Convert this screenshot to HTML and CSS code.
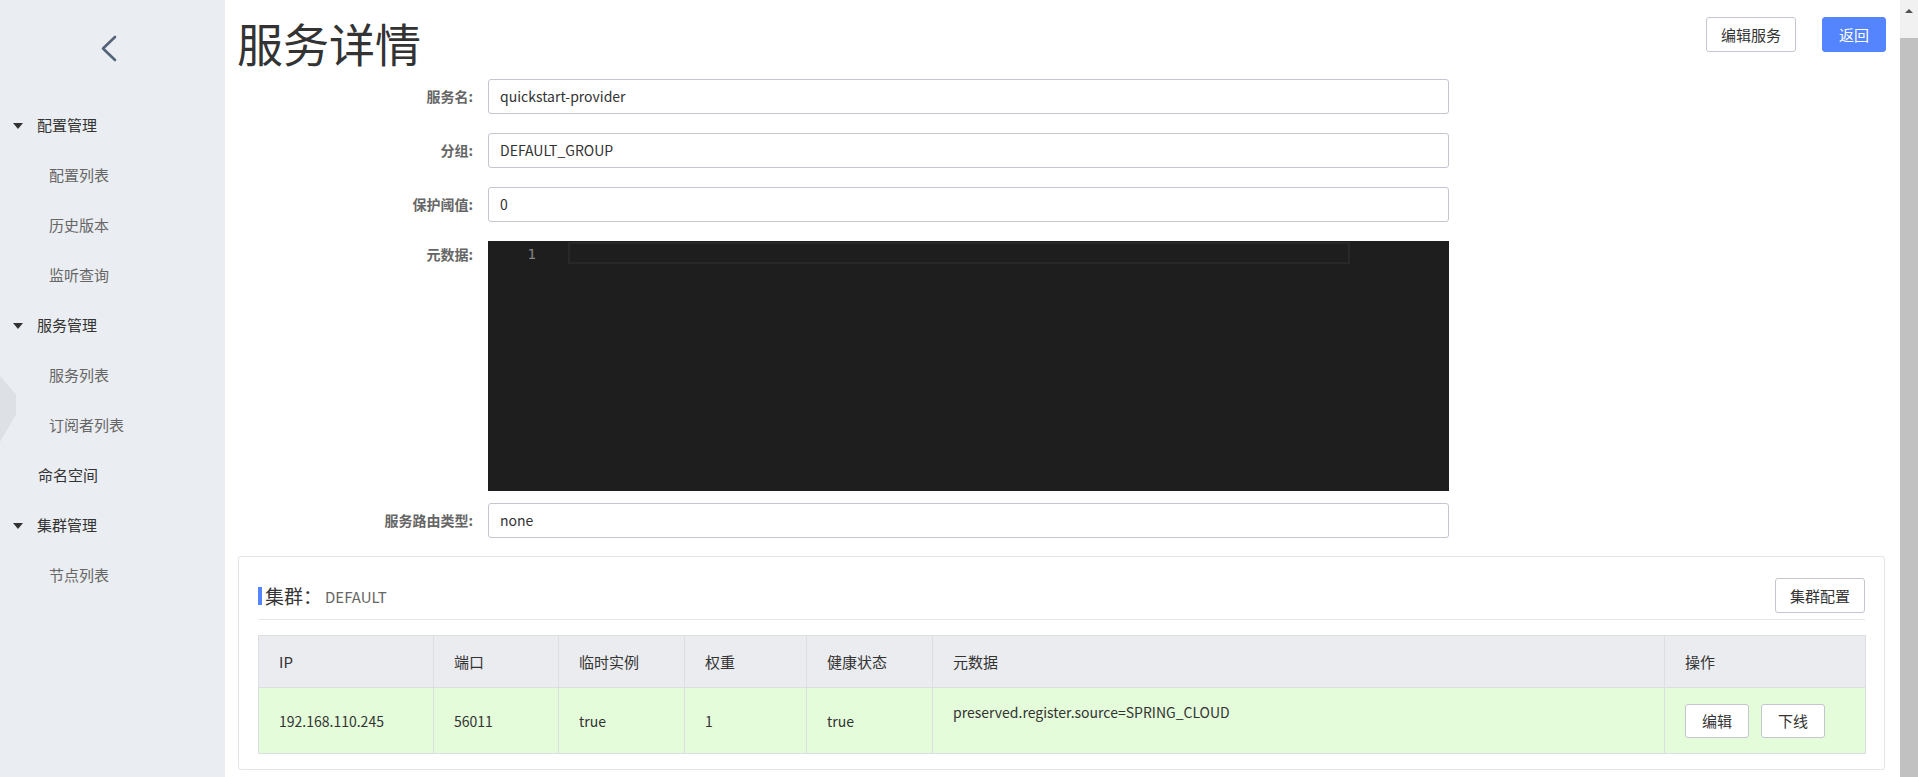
FILE: index.html
```html
<!DOCTYPE html>
<html lang="zh-CN">
<head>
<meta charset="utf-8">
<title>服务详情</title>
<link rel="stylesheet" href="styles.css">
</head>
<body>
<aside class="sidebar">
  <div class="collapse-tab"></div>
  <div class="back">
    <svg width="18" height="27" viewBox="0 0 18 27"><polyline points="15,2 3,13.5 15,25" fill="none" stroke="#546478" stroke-width="2.6" stroke-linecap="round" stroke-linejoin="round"/></svg>
  </div>
  <nav class="menu">
    <div class="group"><span class="caret"></span>配置管理</div>
    <div class="item">配置列表</div>
    <div class="item">历史版本</div>
    <div class="item">监听查询</div>
    <div class="group"><span class="caret"></span>服务管理</div>
    <div class="item">服务列表</div>
    <div class="item">订阅者列表</div>
    <div class="group plain">命名空间</div>
    <div class="group"><span class="caret"></span>集群管理</div>
    <div class="item">节点列表</div>
  </nav>
</aside>

<main class="main">
  <header class="page-head">
    <h1 class="page-title">服务详情</h1>
    <div class="head-actions">
      <button class="btn">编辑服务</button>
      <button class="btn btn-primary">返回</button>
    </div>
  </header>

  <section class="form">
    <label class="form-label">服务名:</label>
    <div class="input">quickstart-provider</div>

    <label class="form-label">分组:</label>
    <div class="input">DEFAULT_GROUP</div>

    <label class="form-label">保护阈值:</label>
    <div class="input">0</div>

    <label class="form-label label-top">元数据:</label>
    <div class="editor">
      <div class="gutter"><span class="ln">1</span></div>
      <div class="code"><div class="current-line"></div></div>
    </div>

    <label class="form-label">服务路由类型:</label>
    <div class="input">none</div>
  </section>

  <section class="cluster-card">
    <div class="card-head">
      <div class="card-title"><span class="title-bar"></span><span class="title-main">集群：</span><span class="title-sub">DEFAULT</span></div>
      <button class="btn">集群配置</button>
    </div>
    <table class="grid">
      <colgroup>
        <col style="width:175px"><col style="width:125px"><col style="width:126px"><col style="width:122px"><col style="width:126px"><col style="width:732px"><col style="width:201px">
      </colgroup>
      <thead>
        <tr><th>IP</th><th>端口</th><th>临时实例</th><th>权重</th><th>健康状态</th><th>元数据</th><th>操作</th></tr>
      </thead>
      <tbody>
        <tr>
          <td>192.168.110.245</td>
          <td>56011</td>
          <td>true</td>
          <td>1</td>
          <td>true</td>
          <td class="td-top">preserved.register.source=SPRING_CLOUD</td>
          <td><div class="ops"><button class="btn btn-sm">编辑</button><button class="btn btn-sm">下线</button></div></td>
        </tr>
      </tbody>
    </table>
  </section>
</main>

<div class="scrollbar">
  <div class="sb-btn"><span class="sb-arrow"></span></div>
  <div class="sb-track"></div>
  <div class="sb-thumb"></div>
</div>
</body>
</html>
```

FILE: styles.css
```css
* { box-sizing: border-box; }

html, body {
  margin: 0;
  height: 100%;
}

body {
  display: flex;
  height: 777px;
  overflow: hidden;
  background: #fff;
  color: #333;
  font-family: "Noto Sans CJK SC", "Noto Sans", sans-serif;
  font-size: 15px;
}

/* ---------- sidebar ---------- */
.sidebar {
  position: relative;
  flex: none;
  width: 225px;
  background: #eaedf1;
}

.collapse-tab {
  position: absolute;
  left: 0;
  top: 376px;
  width: 16px;
  height: 66px;
  background: #dde0e5;
  clip-path: polygon(0 0, 0 0, 100% 28%, 100% 58%, 0 100%);
}

.back {
  height: 100px;
  display: flex;
  justify-content: center;
  padding-top: 35px;
  padding-right: 7px;
}

.menu {
  display: flex;
  flex-direction: column;
}

.group,
.item {
  height: 50px;
  line-height: 50px;
  white-space: nowrap;
}

.group {
  display: flex;
  align-items: center;
  color: #333;
  padding-left: 13px;
}

.group.plain {
  padding-left: 38px;
}

.caret {
  width: 0;
  height: 0;
  border-left: 5.5px solid transparent;
  border-right: 5.5px solid transparent;
  border-top: 6px solid #333;
  margin-right: 14px;
  margin-top: 1px;
}

.item {
  color: #666;
  padding-left: 49px;
}

/* ---------- main ---------- */
.main {
  flex: 1;
  min-width: 0;
  padding: 0 14px 0 12px;
}

.page-head {
  height: 79px;
  display: flex;
  justify-content: space-between;
  align-items: flex-start;
}

.page-title {
  margin: 12px 0 0 0;
  font-size: 46px;
  line-height: 60px;
  font-weight: normal;
  color: #333;
}

.head-actions {
  display: flex;
  gap: 26px;
  margin-top: 17px;
}

.btn {
  height: 35px;
  padding: 0 14px;
  border: 1px solid #c4c6cf;
  border-radius: 3px;
  background: #fff;
  color: #333;
  font-family: inherit;
  font-size: 15px;
  line-height: 33px;
  white-space: nowrap;
}

.btn-primary {
  background: #5584ff;
  border-color: #5584ff;
  color: #fff;
  padding: 0 16px;
}

/* ---------- form ---------- */
.form {
  display: grid;
  grid-template-columns: 236px 961px;
  column-gap: 15px;
  row-gap: 19px;
  align-items: start;
}

.form-label {
  text-align: right;
  font-size: 14px;
  font-weight: bold;
  color: #666;
  line-height: 35px;
  white-space: nowrap;
}

.form-label.label-top {
  line-height: 26px;
}

.input {
  height: 35px;
  line-height: 33px;
  padding: 0 11px;
  border: 1px solid #c4c6cf;
  border-radius: 3px;
  color: #333;
  font-size: 14px;
  white-space: nowrap;
}

.editor {
  display: flex;
  height: 250px;
  background: #1e1e1e;
  margin-bottom: -7px;
}

.gutter {
  width: 80px;
  flex: none;
  text-align: right;
  padding-right: 32px;
  padding-top: 1px;
}

.ln {
  font-family: "DejaVu Sans Mono", "Liberation Mono", monospace;
  font-size: 14px;
  line-height: 22px;
  color: #858585;
}

.code {
  flex: 1;
  padding-top: 1px;
}

.current-line {
  width: 782px;
  height: 22px;
  border: 2px solid #282828;
}

/* ---------- cluster card ---------- */
.cluster-card {
  margin-top: 18px;
  margin-left: 1px;
  margin-right: 1px;
  border: 1px solid #e3e4e8;
  border-radius: 3px;
  padding: 21px 19px 15px 19px;
}

.card-head {
  display: flex;
  justify-content: space-between;
  align-items: center;
  padding-bottom: 6px;
  border-bottom: 1px solid #e6e7eb;
}

.card-title {
  display: flex;
  align-items: center;
}

.title-bar {
  width: 4px;
  height: 18px;
  background: #5584ff;
  margin-right: 3px;
}

.title-main {
  font-size: 19px;
  color: #333;
}

.title-sub {
  font-size: 15px;
  color: #666;
  margin-left: 3px;
  margin-top: 2px;
}

.grid {
  margin-top: 15px;
  width: 1607px;
  border-collapse: collapse;
  table-layout: fixed;
  font-size: 15px;
}

.grid th,
.grid td {
  border: 1px solid #dcdee3;
  text-align: left;
  padding: 0 20px;
  white-space: nowrap;
}

.grid th {
  height: 52px;
  background: #ebecf0;
  color: #333;
  font-weight: normal;
}

.grid td {
  height: 66px;
  background: #e4fcda;
  color: #333;
  font-size: 14px;
}

.grid td.td-top {
  vertical-align: top;
  padding-top: 14px;
}

.ops {
  display: flex;
  gap: 12px;
  padding-top: 1px;
}

.btn-sm {
  height: 34px;
  line-height: 32px;
  padding: 0 16px;
}

/* ---------- scrollbar ---------- */
.scrollbar {
  flex: none;
  width: 18px;
  display: flex;
  flex-direction: column;
  background: #f1f1f1;
}

.sb-btn {
  height: 17px;
  display: flex;
  justify-content: center;
  align-items: center;
}

.sb-arrow {
  width: 0;
  height: 0;
  border-left: 4px solid transparent;
  border-right: 4px solid transparent;
  border-bottom: 4px solid #505050;
  margin-top: 4px;
}

.sb-track {
  height: 21px;
}

.sb-thumb {
  flex: 1;
  background: #c1c1c1;
}
```
